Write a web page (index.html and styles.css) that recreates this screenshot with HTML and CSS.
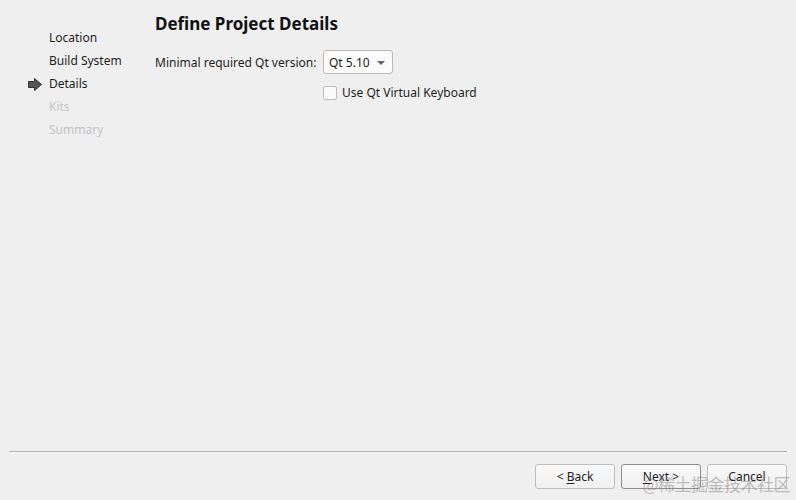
FILE: index.html
```html
<!DOCTYPE html>
<html>
<head>
<meta charset="utf-8">
<link rel="stylesheet" href="styles.css">
</head>
<body>
<div class="wizard">
  <div class="main">
    <ul class="steps">
      <li class="step done">Location</li>
      <li class="step done">Build System</li>
      <li class="step current">
        <svg class="arrow" width="14" height="13" viewBox="0 0 14 13"><path d="M0.5 3.5h6V0.5L13.5 6.5 6.5 12.5V9.5h-6z" fill="#555" stroke="#333" stroke-width="1" stroke-linejoin="round"/></svg>
        Details</li>
      <li class="step todo">Kits</li>
      <li class="step todo">Summary</li>
    </ul>
    <div class="page">
      <h1 class="title">Define Project Details</h1>
      <div class="form">
        <div class="row">
          <span class="label">Minimal required Qt version:</span>
          <div class="combo"><span>Qt 5.10</span><span class="caret"></span></div>
        </div>
        <div class="row check-row">
          <span class="box"></span>
          <span class="check-label">Use Qt Virtual Keyboard</span>
        </div>
      </div>
    </div>
  </div>
  <div class="footer">
    <div class="sep"></div>
    <div class="buttons">
      <button class="btn">&lt; <u>B</u>ack</button>
      <button class="btn btn-default"><u>N</u>ext &gt;</button>
      <button class="btn">Cancel</button>
    </div>
  </div>
  <div class="watermark">@稀土掘金技术社区</div>
</div>
</body>
</html>
```
FILE: styles.css
```css
html, body {
  margin: 0;
  padding: 0;
  background: #efefef;
}
body {
  font-family: "Noto Sans", "Open Sans", sans-serif;
  font-size: 12px;
  color: #1e1e1e;
  width: 796px;
  height: 500px;
  overflow: hidden;
}
.wizard {
  position: relative;
  height: 500px;
  display: flex;
  flex-direction: column;
}
.main {
  flex: 1;
  display: flex;
}
.steps {
  list-style: none;
  margin: 0;
  padding: 29px 0 0 49px;
  box-sizing: border-box;
  width: 155px;
}
.step {
  position: relative;
  height: 23px;
  line-height: 18px;
}
.step.todo { color: #c4c4c4; }
.arrow {
  position: absolute;
  left: -21px;
  top: 3px;
}
.page {
  flex: 1;
  padding-top: 12px;
}
.title {
  margin: 0;
  font-size: 17px;
  font-weight: bold;
  line-height: 24px;
  color: #111;
}
.form {
  margin-top: 14px;
}
.row {
  display: flex;
  align-items: center;
}
.label {
  width: 168px;
}
.combo {
  box-sizing: border-box;
  width: 70px;
  height: 24px;
  border: 1px solid #b9b9b9;
  border-radius: 3px;
  background: #fbfbfb;
  display: flex;
  align-items: center;
  padding-left: 5px;
  position: relative;
}
.caret {
  position: absolute;
  right: 7px;
  top: 10px;
  width: 0;
  height: 0;
  border-left: 4px solid transparent;
  border-right: 4px solid transparent;
  border-top: 4px solid #666;
}
.check-row {
  margin-top: 10px;
  padding-left: 168px;
}
.box {
  box-sizing: border-box;
  width: 14px;
  height: 14px;
  border: 1px solid #bcbcbc;
  border-radius: 2px;
  background: #fafafa;
  margin-right: 5px;
}
.footer {
  padding: 0 9px 11px 9px;
}
.sep {
  height: 1px;
  background: #b0b0b0;
  border-bottom: 1px solid #f8f8f8;
}
.buttons {
  display: flex;
  justify-content: flex-end;
  gap: 6px;
  margin-top: 11px;
}
.btn {
  font-family: "Noto Sans", "Open Sans", sans-serif;
  font-size: 12px;
  color: #1e1e1e;
  width: 80px;
  height: 25px;
  border: 1px solid #bdbdbd;
  border-radius: 3px;
  background: linear-gradient(#f9f9f9, #f0f0f0);
  padding: 0;
}
.btn-default {
  border-color: #8e8e8e;
}
.btn u { text-underline-offset: 2px; }
.watermark {
  position: absolute;
  right: 6px;
  bottom: 4px;
  font-family: "Noto Sans CJK SC", sans-serif;
  font-size: 17px;
  color: rgba(120, 120, 120, 0.45);
  letter-spacing: -0.5px;
}
```
